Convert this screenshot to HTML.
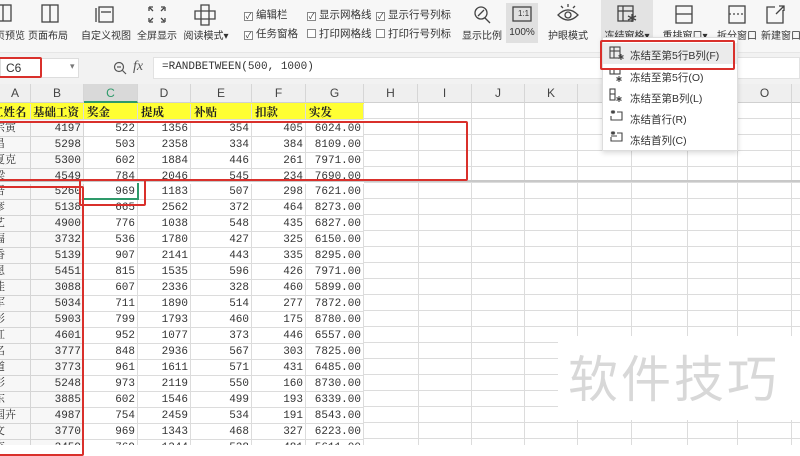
<!DOCTYPE html>
<html><head><meta charset="utf-8"><style>
*{margin:0;padding:0;box-sizing:border-box}
body{width:800px;height:445px;overflow:hidden;background:#fff;position:relative;font-family:"Liberation Sans","Noto Sans CJK SC",sans-serif;color:#333}
.a{position:absolute}
.tb{left:0;top:0;width:800px;height:52px;background:#f7f7f7}
.lbl{position:absolute;top:27px;font-size:10px;color:#333;white-space:nowrap;transform:translateX(-50%)}
.ck{position:absolute;font-size:10.5px;white-space:nowrap}
.ck i{display:inline-block;width:9px;height:9px;border:1px solid #888;background:#fff;vertical-align:-1px;margin-right:3px;font-style:normal;font-size:8px;line-height:7px;text-align:center}
.fb{left:0;top:52px;width:800px;height:32px;background:#f2f2f2;border-top:1px solid #e6e6e6}
.ch{top:84px;height:19px;background:#efefef;border-right:1px solid #d6d6d6;border-bottom:1px solid #d0d0d0;font-size:12px;text-align:center;line-height:19px;color:#444}
.row{position:absolute;left:0;width:800px;height:16px;font-family:"Liberation Mono","Noto Serif CJK SC",monospace;font-size:11px;line-height:17px;color:#333}
.row span{position:absolute;text-align:right;height:16px;border-right:1px solid #dcdcdc;border-bottom:1px solid #dcdcdc;padding-right:2px}
.g{position:absolute;top:103px;width:1px;height:342px;background:#dcdcdc}
.rb{position:absolute;border:2px solid #d9302b;border-radius:2px}
.menu{left:602px;top:37px;width:136px;height:114px;background:#fff;border:1px solid #ddd;box-shadow:0 2px 5px rgba(0,0,0,.15);font-size:10.5px}
.mi{position:absolute;left:27px;white-space:nowrap;color:#333}
</style></head><body>
<div class="a tb"></div>
<svg class="a" style="left:0;top:0" width="800" height="52" fill="none" stroke="#444" stroke-width="1.3">
<rect x="-4" y="5" width="15" height="16"/><line x1="3" y1="5" x2="3" y2="21"/>
<rect x="42" y="5" width="16" height="17"/><line x1="50" y1="5" x2="50" y2="22"/>
<line x1="96" y1="8" x2="96" y2="22"/><rect x="99" y="7" width="14" height="15"/><line x1="101" y1="12" x2="111" y2="12"/>
<path d="M149 7h4M149 7v4M165 7h-4M165 7v4M149 22h4M149 22v-4M165 22h-4M165 22v-4M150 8l3 3M164 8l-3 3M150 21l3-3M164 21l-3-3"/>
<path d="M201 5h8v6h6v8h-6v6h-8v-6h-6v-8h6zM201 11h8v8h-8z"/>
<circle cx="481" cy="13" r="6"/><line x1="485" y1="18" x2="490" y2="23"/><path d="M478 16l6-6"/>
<rect x="506" y="3" width="32" height="40" fill="#e0e0e0" stroke="none"/>
<rect x="513" y="7" width="18" height="14"/>
<path d="M558 15q10-10 20 0q-10 10-20 0z"/><circle cx="568" cy="15" r="3"/><path d="M568 4v3M561 6l2 2M575 6l-2 2"/>
<rect x="601" y="0" width="52" height="44" fill="#e3e3e3" stroke="none"/>
<rect x="618" y="6" width="15" height="15"/><line x1="618" y1="11" x2="633" y2="11"/><line x1="623" y1="6" x2="623" y2="21"/><path d="M632 14v8M628 16l8 4M636 16l-8 4"/>
<rect x="676" y="6" width="16" height="17"/><line x1="676" y1="14" x2="692" y2="14"/>
<rect x="729" y="6" width="16" height="17"/><line x1="729" y1="14" x2="745" y2="14" stroke-dasharray="2 2"/>
<path d="M783 10v13h-16v-16h8M776 14l8-8M779 6h5v5"/>
</svg>
<div class="lbl" style="left:10px">页预览</div>
<div class="lbl" style="left:48px">页面布局</div>
<div class="lbl" style="left:106px">自定义视图</div>
<div class="lbl" style="left:157px">全屏显示</div>
<div class="lbl" style="left:206px">阅读模式▾</div>
<div class="ck" style="left:244px;top:7px"><i>✓</i>编辑栏</div>
<div class="ck" style="left:244px;top:26px"><i>✓</i>任务窗格</div>
<div class="ck" style="left:307px;top:7px"><i>✓</i>显示网格线</div>
<div class="ck" style="left:307px;top:26px"><i></i>打印网格线</div>
<div class="ck" style="left:376px;top:7px"><i>✓</i>显示行号列标</div>
<div class="ck" style="left:376px;top:26px"><i></i>打印行号列标</div>
<div style="position:absolute;left:518px;top:9px;font-size:8px">1:1</div>
<div class="lbl" style="left:482px">显示比例</div>
<div class="lbl" style="left:522px">100%</div>
<div class="lbl" style="left:568px">护眼模式</div>
<div class="lbl" style="left:627px">冻结窗格▾</div>
<div class="lbl" style="left:685px">重排窗口▾</div>
<div class="lbl" style="left:737px">拆分窗口</div>
<div class="lbl" style="left:781px">新建窗口</div>
<div class="a fb"></div>
<div class="a" style="left:0;top:58px;width:79px;height:20px;background:#fff;border:1px solid #ddd"></div>
<div class="a" style="left:6px;top:61px;font-size:12px">C6</div>
<div class="a" style="left:70px;top:61px;font-size:9px;color:#777">▾</div>
<div class="rb" style="left:-3px;top:57px;width:45px;height:21px"></div>
<svg class="a" style="left:113px;top:61px" width="14" height="14" fill="none" stroke="#555" stroke-width="1.2"><circle cx="6" cy="6" r="4.5"/><line x1="4" y1="6" x2="8" y2="6"/><line x1="9.5" y1="9.5" x2="13" y2="13"/></svg>
<div class="a" style="left:133px;top:59px;font-size:14px;font-style:italic;font-family:'Liberation Serif',serif;color:#555">fx</div>
<div class="a" style="left:153px;top:57px;width:647px;height:22px;background:#fff;border:1px solid #e2e2e2"></div>
<div class="a" style="left:162px;top:61px;font-size:11px;font-family:'Liberation Mono',monospace">=RANDBETWEEN(500, 1000)</div>
<div class="a ch" style="left:0;width:31px">A</div>
<div class="a ch" style="left:31px;width:53px">B</div>
<div class="a ch" style="left:84px;width:54px;background:#d9d9d9;color:#2e9a6a;border-bottom:2px solid #2e9a6a">C</div>
<div class="a ch" style="left:138px;width:53px">D</div>
<div class="a ch" style="left:191px;width:61px">E</div>
<div class="a ch" style="left:252px;width:54px">F</div>
<div class="a ch" style="left:306px;width:58px">G</div>
<div class="a ch" style="left:364px;width:54px">H</div>
<div class="a ch" style="left:418px;width:54px">I</div>
<div class="a ch" style="left:472px;width:53px">J</div>
<div class="a ch" style="left:525px;width:53px">K</div>
<div class="a ch" style="left:578px;width:54px">L</div>
<div class="a ch" style="left:632px;width:56px">M</div>
<div class="a ch" style="left:688px;width:50px">N</div>
<div class="a ch" style="left:738px;width:54px">O</div>
<div class="a ch" style="left:792px;width:10px"></div>
<div class="g" style="left:418px"></div><div class="g" style="left:471px"></div><div class="g" style="left:524px"></div><div class="g" style="left:577px"></div><div class="g" style="left:631px"></div><div class="g" style="left:687px"></div><div class="g" style="left:737px"></div><div class="g" style="left:791px"></div>
<div class="a" style="left:364px;top:103px;width:436px;height:342px;background:repeating-linear-gradient(to bottom,transparent 0,transparent 15px,#dcdcdc 15px,#dcdcdc 16px)"></div>
<div class="a" style="left:0;top:103px;width:364px;height:17px;background:#ffff33"></div>
<div class="row" style="top:104px;font-family:'Noto Serif CJK SC',serif;font-weight:bold;font-size:11.5px;color:#222;line-height:16px">
<span style="left:-8px;width:39px;text-align:left">工姓名</span><span style="left:31px;width:53px;text-align:left;padding-left:2px">基础工资</span><span style="left:84px;width:54px;text-align:left;padding-left:3px">奖金</span><span style="left:138px;width:53px;text-align:left;padding-left:3px">提成</span><span style="left:191px;width:61px;text-align:left;padding-left:3px">补贴</span><span style="left:252px;width:54px;text-align:left;padding-left:3px">扣款</span><span style="left:306px;width:58px;text-align:left;padding-left:3px">实发</span></div>
<div class="a" style="left:0;top:120px;width:800px;height:61px;overflow:hidden">
<div class="row" style="top:1px"><span style="left:-6px;width:37px;text-align:left">宗寅</span><span style="left:31px;width:53px">4197</span><span style="left:84px;width:54px">522</span><span style="left:138px;width:53px">1356</span><span style="left:191px;width:61px">354</span><span style="left:252px;width:54px">405</span><span style="left:306px;width:58px">6024.00</span></div>
<div class="row" style="top:17px"><span style="left:-6px;width:37px;text-align:left">昌</span><span style="left:31px;width:53px">5298</span><span style="left:84px;width:54px">503</span><span style="left:138px;width:53px">2358</span><span style="left:191px;width:61px">334</span><span style="left:252px;width:54px">384</span><span style="left:306px;width:58px">8109.00</span></div>
<div class="row" style="top:33px"><span style="left:-6px;width:37px;text-align:left">夏克</span><span style="left:31px;width:53px">5300</span><span style="left:84px;width:54px">602</span><span style="left:138px;width:53px">1884</span><span style="left:191px;width:61px">446</span><span style="left:252px;width:54px">261</span><span style="left:306px;width:58px">7971.00</span></div>
<div class="row" style="top:49px"><span style="left:-6px;width:37px;text-align:left">梁</span><span style="left:31px;width:53px">4549</span><span style="left:84px;width:54px">784</span><span style="left:138px;width:53px">2046</span><span style="left:191px;width:61px">545</span><span style="left:252px;width:54px">234</span><span style="left:306px;width:58px">7690.00</span></div>
</div>
<div class="a" style="left:0;top:180px;width:800px;height:2px;background:#c8c8c8"></div>
<div class="a" style="left:0;top:182px;width:800px;height:263px;overflow:hidden">
<div class="row" style="top:2px"><span style="left:-6px;width:37px;text-align:left">吾</span><span style="left:31px;width:53px">5260</span><span style="left:84px;width:54px">969</span><span style="left:138px;width:53px">1183</span><span style="left:191px;width:61px">507</span><span style="left:252px;width:54px">298</span><span style="left:306px;width:58px">7621.00</span></div>
<div class="row" style="top:18px"><span style="left:-6px;width:37px;text-align:left">彦</span><span style="left:31px;width:53px">5138</span><span style="left:84px;width:54px">665</span><span style="left:138px;width:53px">2562</span><span style="left:191px;width:61px">372</span><span style="left:252px;width:54px">464</span><span style="left:306px;width:58px">8273.00</span></div>
<div class="row" style="top:34px"><span style="left:-6px;width:37px;text-align:left">艺</span><span style="left:31px;width:53px">4900</span><span style="left:84px;width:54px">776</span><span style="left:138px;width:53px">1038</span><span style="left:191px;width:61px">548</span><span style="left:252px;width:54px">435</span><span style="left:306px;width:58px">6827.00</span></div>
<div class="row" style="top:50px"><span style="left:-6px;width:37px;text-align:left">福</span><span style="left:31px;width:53px">3732</span><span style="left:84px;width:54px">536</span><span style="left:138px;width:53px">1780</span><span style="left:191px;width:61px">427</span><span style="left:252px;width:54px">325</span><span style="left:306px;width:58px">6150.00</span></div>
<div class="row" style="top:66px"><span style="left:-6px;width:37px;text-align:left">香</span><span style="left:31px;width:53px">5139</span><span style="left:84px;width:54px">907</span><span style="left:138px;width:53px">2141</span><span style="left:191px;width:61px">443</span><span style="left:252px;width:54px">335</span><span style="left:306px;width:58px">8295.00</span></div>
<div class="row" style="top:82px"><span style="left:-6px;width:37px;text-align:left">恩</span><span style="left:31px;width:53px">5451</span><span style="left:84px;width:54px">815</span><span style="left:138px;width:53px">1535</span><span style="left:191px;width:61px">596</span><span style="left:252px;width:54px">426</span><span style="left:306px;width:58px">7971.00</span></div>
<div class="row" style="top:98px"><span style="left:-6px;width:37px;text-align:left">佳</span><span style="left:31px;width:53px">3088</span><span style="left:84px;width:54px">607</span><span style="left:138px;width:53px">2336</span><span style="left:191px;width:61px">328</span><span style="left:252px;width:54px">460</span><span style="left:306px;width:58px">5899.00</span></div>
<div class="row" style="top:114px"><span style="left:-6px;width:37px;text-align:left">军</span><span style="left:31px;width:53px">5034</span><span style="left:84px;width:54px">711</span><span style="left:138px;width:53px">1890</span><span style="left:191px;width:61px">514</span><span style="left:252px;width:54px">277</span><span style="left:306px;width:58px">7872.00</span></div>
<div class="row" style="top:130px"><span style="left:-6px;width:37px;text-align:left">影</span><span style="left:31px;width:53px">5903</span><span style="left:84px;width:54px">799</span><span style="left:138px;width:53px">1793</span><span style="left:191px;width:61px">460</span><span style="left:252px;width:54px">175</span><span style="left:306px;width:58px">8780.00</span></div>
<div class="row" style="top:146px"><span style="left:-6px;width:37px;text-align:left">红</span><span style="left:31px;width:53px">4601</span><span style="left:84px;width:54px">952</span><span style="left:138px;width:53px">1077</span><span style="left:191px;width:61px">373</span><span style="left:252px;width:54px">446</span><span style="left:306px;width:58px">6557.00</span></div>
<div class="row" style="top:162px"><span style="left:-6px;width:37px;text-align:left">名</span><span style="left:31px;width:53px">3777</span><span style="left:84px;width:54px">848</span><span style="left:138px;width:53px">2936</span><span style="left:191px;width:61px">567</span><span style="left:252px;width:54px">303</span><span style="left:306px;width:58px">7825.00</span></div>
<div class="row" style="top:178px"><span style="left:-6px;width:37px;text-align:left">道</span><span style="left:31px;width:53px">3773</span><span style="left:84px;width:54px">961</span><span style="left:138px;width:53px">1611</span><span style="left:191px;width:61px">571</span><span style="left:252px;width:54px">431</span><span style="left:306px;width:58px">6485.00</span></div>
<div class="row" style="top:194px"><span style="left:-6px;width:37px;text-align:left">彩</span><span style="left:31px;width:53px">5248</span><span style="left:84px;width:54px">973</span><span style="left:138px;width:53px">2119</span><span style="left:191px;width:61px">550</span><span style="left:252px;width:54px">160</span><span style="left:306px;width:58px">8730.00</span></div>
<div class="row" style="top:210px"><span style="left:-6px;width:37px;text-align:left">东</span><span style="left:31px;width:53px">3885</span><span style="left:84px;width:54px">602</span><span style="left:138px;width:53px">1546</span><span style="left:191px;width:61px">499</span><span style="left:252px;width:54px">193</span><span style="left:306px;width:58px">6339.00</span></div>
<div class="row" style="top:226px"><span style="left:-6px;width:37px;text-align:left">国卉</span><span style="left:31px;width:53px">4987</span><span style="left:84px;width:54px">754</span><span style="left:138px;width:53px">2459</span><span style="left:191px;width:61px">534</span><span style="left:252px;width:54px">191</span><span style="left:306px;width:58px">8543.00</span></div>
<div class="row" style="top:242px"><span style="left:-6px;width:37px;text-align:left">文</span><span style="left:31px;width:53px">3770</span><span style="left:84px;width:54px">969</span><span style="left:138px;width:53px">1343</span><span style="left:191px;width:61px">468</span><span style="left:252px;width:54px">327</span><span style="left:306px;width:58px">6223.00</span></div>
<div class="row" style="top:258px"><span style="left:-6px;width:37px;text-align:left">李</span><span style="left:31px;width:53px">3459</span><span style="left:84px;width:54px">769</span><span style="left:138px;width:53px">1344</span><span style="left:191px;width:61px">538</span><span style="left:252px;width:54px">481</span><span style="left:306px;width:58px">5611.00</span></div>
</div>
<div class="a" style="left:0;top:120px;width:84px;height:325px;background:rgba(0,0,0,0.03);pointer-events:none"></div>
<div class="a" style="left:84px;top:183px;width:55px;height:17px;border:2px solid #2e9a6a;border-top:none;border-left:none"></div>
<div class="a" style="left:84px;top:198px;width:55px;height:2px;background:#2e9a6a"></div>
<div class="rb" style="left:-10px;top:121px;width:478px;height:60px"></div>
<div class="rb" style="left:79px;top:179px;width:67px;height:27px"></div>
<div class="rb" style="left:-10px;top:186px;width:94px;height:270px"></div>
<div class="a" style="left:558px;top:336px;width:242px;height:84px;background:#fff"></div>
<div class="a" style="left:568px;top:343px;font-size:50px;color:#d8d8d8;letter-spacing:3px;font-family:'Noto Sans CJK SC',sans-serif;line-height:66px">软件技巧</div>
<div class="a menu">
<div class="a" style="left:0;top:5px;width:134px;height:21px;background:#ebebeb"></div>
<svg class="a" style="left:6px;top:8px" width="16" height="100" fill="none" stroke="#444" stroke-width="1.1">
<rect x="1" y="1" width="10" height="11"/><line x1="1" y1="5" x2="11" y2="5"/><line x1="5" y1="1" x2="5" y2="12"/><path d="M12 8v6M9.5 9.5l5 3M14.5 9.5l-5 3"/>
<rect x="1" y="23" width="10" height="5"/><line x1="5" y1="23" x2="5" y2="28"/><path d="M10 30v6M7.5 31.5l5 3M12.5 31.5l-5 3"/>
<rect x="1" y="43" width="5" height="11"/><line x1="1" y1="48" x2="6" y2="48"/><path d="M10 50v6M7.5 51.5l5 3M12.5 51.5l-5 3"/>
<path d="M4 64v4M2 65l4 2M6 65l-4 2M8 66h5v8H2v-4"/>
<path d="M4 85v4M2 86l4 2M6 86l-4 2M8 87h5v8H2v-4M2 90h6"/>
</svg>
<div class="mi" style="top:10px">冻结至第5行B列(F)</div>
<div class="mi" style="top:32px">冻结至第5行(O)</div>
<div class="mi" style="top:53px">冻结至第B列(L)</div>
<div class="mi" style="top:74px">冻结首行(R)</div>
<div class="mi" style="top:95px">冻结首列(C)</div>
</div>
<div class="rb" style="left:600px;top:40px;width:135px;height:30px"></div>
</body></html>
